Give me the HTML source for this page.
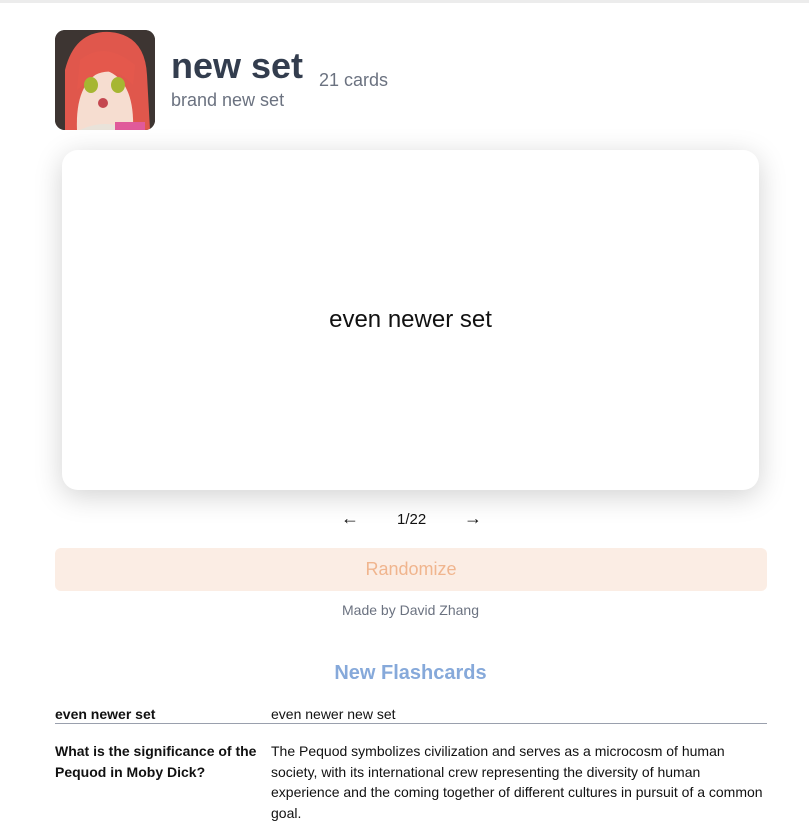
<!DOCTYPE html>
<html><head><style>
body{margin:0;width:809px;height:808px;overflow:hidden;background:#fff;font-family:"Liberation Sans",Arial,sans-serif;position:relative}
.topbar{position:absolute;top:0;left:0;width:809px;height:3px;background:#ececec}
.av{position:absolute;left:55px;top:30px;width:100px;height:100px;border-radius:10px;overflow:hidden;background:#3a3430}
.t{position:absolute;left:171px;top:45px;font-size:36px;font-weight:bold;color:#333d4e}
.sub{position:absolute;left:171px;top:90px;font-size:18px;color:#6b7280}
.cnt{position:absolute;left:319px;top:70px;font-size:18px;color:#6b7280}
.card{position:absolute;left:62px;top:150px;width:697px;height:340px;border-radius:16px;background:#fff;box-shadow:0 6px 28px rgba(0,0,0,0.18);display:flex;align-items:center;justify-content:center;font-size:24px;color:#111}
.nav{position:absolute;top:508px;font-size:18px;font-weight:bold;color:#111}
.btn{position:absolute;left:55px;top:548px;width:712px;height:43px;border-radius:6px;background:#fbede4;color:#f0b58e;font-size:18px;text-align:center;line-height:43px}
.made{position:absolute;top:602px;left:0;width:821px;text-align:center;font-size:14px;color:#6b7280}
.h{position:absolute;top:662px;left:0;width:821px;text-align:center;font-size:20px;font-weight:bold;color:#86a9da}
.r{position:absolute;font-size:14px;color:#111;line-height:20px}
</style></head><body>
<div class="topbar"></div>
<div class="av"><svg width="100" height="100" viewBox="0 0 100 100">
<rect width="100" height="100" fill="#3d3532"/>
<path d="M10 100 L10 40 Q20 0 55 2 Q90 5 92 45 L95 100 Z" fill="#e0574c"/>
<path d="M22 100 Q20 50 50 40 Q80 50 78 100Z" fill="#f6ddd0"/>
<path d="M25 30 Q50 10 80 35 L78 55 Q60 35 40 45 L22 60Z" fill="#e4584c"/>
<ellipse cx="36" cy="55" rx="7" ry="8" fill="#a6b632"/><ellipse cx="63" cy="55" rx="7" ry="8" fill="#a6b632"/>
<ellipse cx="48" cy="73" rx="5" ry="5" fill="#c4474f"/>
<path d="M25 100 Q50 88 75 100Z" fill="#e9e3da"/><rect x="60" y="92" width="30" height="8" fill="#e05a9a"/>
</svg></div>
<div class="t">new set</div>
<div class="sub">brand new set</div>
<div class="cnt">21 cards</div>
<div class="card">even newer set</div>
<div class="nav" style="left:341px">←</div>
<div class="nav" style="left:397px;top:511px;font-size:15px;font-weight:normal">1/22</div>
<div class="nav" style="left:464px">→</div>
<div class="btn">Randomize</div>
<div class="made">Made by David Zhang</div>
<div class="h">New Flashcards</div>
<div class="r" style="left:55px;top:704px;font-weight:bold">even newer set</div>
<div class="r" style="left:271px;top:704px">even newer new set</div>
<div style="position:absolute;left:55px;top:723px;width:712px;height:1px;background:#9aa0ad"></div>
<div class="r" style="left:55px;top:741px;font-weight:bold;width:210px;line-height:20.5px">What is the significance of the Pequod in Moby Dick?</div>
<div class="r" style="left:271px;top:741px;width:500px;line-height:20.5px">The Pequod symbolizes civilization and serves as a microcosm of human society, with its international crew representing the diversity of human experience and the coming together of different cultures in pursuit of a common goal.</div>
</body></html>
